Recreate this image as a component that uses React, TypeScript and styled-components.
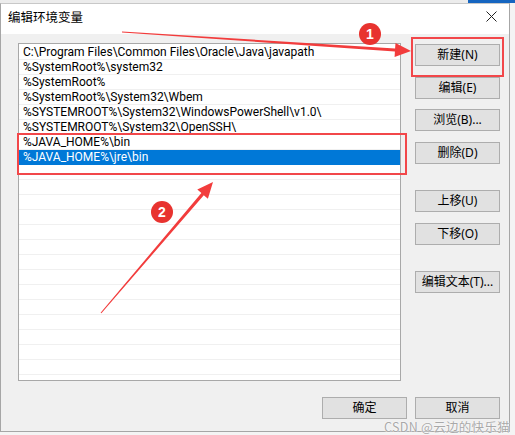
import React from "react";
import styled, { createGlobalStyle } from "styled-components";

const GlobalStyle = createGlobalStyle`
  html, body { margin: 0; padding: 0; background: #f4f4f4; }
  body { font-family: "Noto Sans", "Noto Sans CJK SC", sans-serif; }
`;

const Screen = styled.div`
  position: relative;
  width: 515px;
  height: 435px;
  overflow: hidden;
  background: #f4f4f4;
`;

const TopStrip = styled.div`
  display: flex;
  height: 3px;
`;

const StripPart = styled.div<{ $color: string; $w?: number }>`
  background: ${(p) => p.$color};
  ${(p) => (p.$w ? `width: ${p.$w}px;` : "flex: 1;")}
`;

const Dialog = styled.div`
  width: 510px;
  height: 429px;
  box-sizing: border-box;
  border: 1px solid #a6a6a6;
  border-top-color: #c8c8c8;
  display: flex;
  flex-direction: column;
  background: #f0f0f0;
`;

const TitleBar = styled.div`
  height: 30px;
  background: #ffffff;
  display: flex;
  align-items: flex-start;
  justify-content: space-between;
  padding: 0 6px 0 7px;
`;

const Title = styled.span`
  font-family: "Noto Sans CJK SC", sans-serif;
  font-size: 12.5px;
  line-height: 14px;
  color: #000;
  margin-top: 6px;
`;

const CloseIcon = styled.svg`
  width: 11px;
  height: 11px;
  margin-right: 6px;
  margin-top: 7px;
`;

const Body = styled.div`
  flex: 1;
  display: flex;
  flex-direction: column;
  padding: 9px 9px 0 17px;
`;

const MainRow = styled.div`
  display: flex;
  gap: 14px;
`;

const ListBox = styled.div`
  width: 383px;
  height: 338px;
  box-sizing: border-box;
  border: 1px solid #a8a8a8;
  background: #ffffff;
  padding-top: 1px;
  overflow: hidden;
`;

const Row = styled.div<{ $selected?: boolean }>`
  height: 15px;
  box-sizing: border-box;
  border-bottom: 1px solid #f0f0f0;
  padding-left: 4px;
  font-family: Roboto, "Noto Sans", sans-serif;
  font-size: 12px;
  line-height: 14px;
  white-space: nowrap;
  color: ${(p) => (p.$selected ? "#ffffff" : "#000000")};
  background: ${(p) => (p.$selected ? "#0078d7" : "transparent")};
  border-bottom-color: ${(p) => (p.$selected ? "#0078d7" : "#f0f0f0")};
`;

const ButtonColumn = styled.div`
  display: flex;
  flex-direction: column;
  padding-top: 1px;
`;

const Button = styled.div<{ $gapTop?: number }>`
  width: 85px;
  height: 22px;
  box-sizing: border-box;
  border: 1px solid #adadad;
  background: #e1e1e1;
  display: flex;
  align-items: center;
  justify-content: center;
  font-size: 12px;
  line-height: 14px;
  color: #000;
  margin-top: ${(p) => p.$gapTop ?? 0}px;
`;

const Footer = styled.div`
  display: flex;
  justify-content: flex-end;
  gap: 8px;
  margin-top: 16px;
`;

const Highlight = styled.div<{ $x: number; $y: number; $w: number; $h: number }>`
  position: absolute;
  left: ${(p) => p.$x}px;
  top: ${(p) => p.$y}px;
  width: ${(p) => p.$w}px;
  height: ${(p) => p.$h}px;
  box-sizing: border-box;
  border: 2px solid #f2474a;
  pointer-events: none;
`;

const Badge = styled.div<{ $x: number; $y: number }>`
  position: absolute;
  left: ${(p) => p.$x - 11}px;
  top: ${(p) => p.$y - 11}px;
  width: 22px;
  height: 22px;
  border-radius: 50%;
  background: #e8332f;
  color: #fff;
  font-family: "Liberation Sans", sans-serif;
  font-weight: bold;
  font-size: 14px;
  display: flex;
  align-items: center;
  justify-content: center;
`;

const Arrows = styled.svg`
  position: absolute;
  left: 0;
  top: 0;
  pointer-events: none;
`;

const Watermark = styled.div`
  position: absolute;
  right: 5px;
  top: 420px;
  font-family: "Noto Sans CJK SC", sans-serif;
  font-size: 12.5px;
  line-height: 13px;
  color: #a9a9a9;
  text-shadow: 0 0 2px #fff, 0 0 1px #fff;
  letter-spacing: 0.3px;
`;

const rows = [
  "C:\\Program Files\\Common Files\\Oracle\\Java\\javapath",
  "%SystemRoot%\\system32",
  "%SystemRoot%",
  "%SystemRoot%\\System32\\Wbem",
  "%SYSTEMROOT%\\System32\\WindowsPowerShell\\v1.0\\",
  "%SYSTEMROOT%\\System32\\OpenSSH\\",
  "%JAVA_HOME%\\bin",
  "%JAVA_HOME%\\jre\\bin",
];

const TOTAL_ROWS = 22;

function arrowPoints(
  tx: number,
  ty: number,
  fx: number,
  fy: number,
  headLen: number,
  headHalf: number,
  tailHalf: number,
  shaftHalf: number
) {
  const dx = tx - fx;
  const dy = ty - fy;
  const len = Math.hypot(dx, dy);
  const ux = dx / len;
  const uy = dy / len;
  const px = -uy;
  const py = ux;
  const bx = tx - ux * headLen;
  const by = ty - uy * headLen;
  const pts = [
    [fx + px * tailHalf, fy + py * tailHalf],
    [bx + px * shaftHalf, by + py * shaftHalf],
    [bx + px * headHalf, by + py * headHalf],
    [tx, ty],
    [bx - px * headHalf, by - py * headHalf],
    [bx - px * shaftHalf, by - py * shaftHalf],
    [fx - px * tailHalf, fy - py * tailHalf],
  ];
  return pts.map((p) => `${p[0].toFixed(1)},${p[1].toFixed(1)}`).join(" ");
}

export default function App() {
  const list = Array.from({ length: TOTAL_ROWS }, (_, i) => rows[i] ?? "");
  return (
    <>
      <GlobalStyle />
      <Screen>
        <TopStrip>
          <StripPart $color="#ececec" />
          <StripPart $color="#1565c0" $w={47} />
        </TopStrip>
        <Dialog>
          <TitleBar>
            <Title>编辑环境变量</Title>
            <CloseIcon viewBox="0 0 11 11">
              <path d="M0.5 0.5 L10.5 10.5 M10.5 0.5 L0.5 10.5" stroke="#222" strokeWidth="1" fill="none" />
            </CloseIcon>
          </TitleBar>
          <Body>
            <MainRow>
              <ListBox>
                {list.map((t, i) => (
                  <Row key={i} $selected={i === 7}>
                    {t}
                  </Row>
                ))}
              </ListBox>
              <ButtonColumn>
                <Button>新建(N)</Button>
                <Button $gapTop={10.5}>编辑(E)</Button>
                <Button $gapTop={10.5}>浏览(B)...</Button>
                <Button $gapTop={10.5}>删除(D)</Button>
                <Button $gapTop={26.5}>上移(U)</Button>
                <Button $gapTop={10.5}>下移(O)</Button>
                <Button $gapTop={26.5}>编辑文本(T)...</Button>
              </ButtonColumn>
            </MainRow>
            <Footer>
              <Button>确定</Button>
              <Button>取消</Button>
            </Footer>
          </Body>
        </Dialog>

        <Highlight $x={17} $y={133} $w={390} $h={42} />
        <Highlight $x={411} $y={37} $w={93} $h={40} />

        <Arrows width="515" height="435" viewBox="0 0 515 435">
          <polygon points={arrowPoints(411, 51, 122, 32, 16, 7, 0.5, 1.6)} fill="#f23c3c" />
          <polygon points={arrowPoints(213, 182, 101, 313, 16, 7, 0.5, 1.6)} fill="#f23c3c" />
        </Arrows>

        <Badge $x={370} $y={34}>1</Badge>
        <Badge $x={162} $y={212}>2</Badge>

        <Watermark>CSDN @云边的快乐猫</Watermark>
      </Screen>
    </>
  );
}
